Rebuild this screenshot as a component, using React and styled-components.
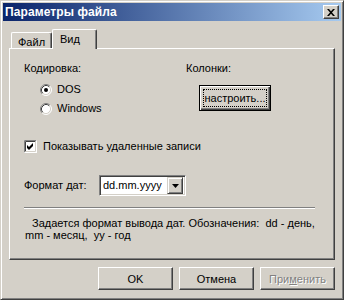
import React from "react";
import styled, { createGlobalStyle } from "styled-components";

const GlobalStyle = createGlobalStyle`
  html, body {
    margin: 0;
    padding: 0;
  }
  body {
    background: #d4d0c8;
    font-family: "Liberation Sans", Arial, sans-serif;
    font-size: 11px;
    color: #000;
  }
  * {
    box-sizing: border-box;
  }
`;

const Window = styled.div`
  width: 344px;
  height: 300px;
  display: flex;
  flex-direction: column;
  background: #d4d0c8;
  border: 1px solid;
  border-color: #d4d0c8 #404040 #404040 #d4d0c8;
  box-shadow: inset 1px 1px #fff, inset -1px -1px #808080;
  padding: 2px;
`;

const TitleBar = styled.div`
  height: 18px;
  display: flex;
  align-items: center;
  justify-content: space-between;
  padding: 0 2px;
  background: linear-gradient(to right, #0a246a, #a6caf0);
`;

const Title = styled.span`
  color: #fff;
  font-weight: bold;
  font-size: 12px;
  letter-spacing: 0.1px;
`;

const CloseButton = styled.div`
  width: 16px;
  height: 14px;
  display: flex;
  align-items: center;
  justify-content: center;
  background: #d4d0c8;
  border: 1px solid;
  border-color: #fff #404040 #404040 #fff;
  box-shadow: inset -1px -1px #808080;
`;

const Body = styled.div`
  flex: 1;
  display: flex;
  flex-direction: column;
  padding: 8px 6px 0 6px;
`;

const TabStrip = styled.div`
  height: 20px;
  display: flex;
  align-items: flex-end;
  padding-left: 2px;
  margin-bottom: -1px;
  position: relative;
  z-index: 1;
`;

const Tab = styled.div`
  height: ${(p) => (p.$active ? 20 : 16)}px;
  margin-bottom: ${(p) => (p.$active ? 0 : 1)}px;
  width: ${(p) => p.$w}px;
  padding: ${(p) => (p.$active ? "3px 0 0 7px" : "3px 0 0 6px")};
  background: #d4d0c8;
  border-top: 1px solid #fff;
  border-left: 1px solid #fff;
  border-right: 1px solid #404040;
  border-radius: 2px 2px 0 0;
  box-shadow: inset -1px 0 #808080;
  line-height: 13px;
`;

const Panel = styled.div`
  height: 212px;
  display: flex;
  flex-direction: column;
  padding-left: 14px;
  border: 1px solid;
  border-color: #fff #404040 #404040 #fff;
  box-shadow: inset -1px -1px #808080;
`;

const TopGrid = styled.div`
  display: grid;
  grid-template-columns: 162px 1fr;
  margin-top: 13px;
`;

const Column = styled.div`
  display: flex;
  flex-direction: column;
  align-items: flex-start;
`;

const Label = styled.div`
  line-height: 13px;
  white-space: nowrap;
  width: ${(p) => (p.$w ? `${p.$w}px` : "auto")};
`;

const RadioList = styled.div`
  display: flex;
  flex-direction: column;
  gap: 6px;
  margin-top: 8px;
  padding-left: 16px;
`;

const OptionRow = styled.div`
  display: flex;
  align-items: center;
  gap: ${(p) => p.$gap || 5}px;
  height: 13px;
  line-height: 13px;
  margin-top: ${(p) => p.$mt || 0}px;
`;

const DefaultButton = styled.div`
  width: 72px;
  height: 26px;
  margin-top: 10px;
  margin-left: 13px;
  display: flex;
  padding: 3px;
  background: #d4d0c8;
  border: 1px solid #000;
  box-shadow: inset 1px 1px #fff, inset -1px -1px #404040, inset -2px -2px #808080;
`;

const FocusRing = styled.div`
  flex: 1;
  display: flex;
  align-items: center;
  justify-content: center;
  border: 1px dotted #000;
`;

const FormatRow = styled.div`
  display: flex;
  align-items: center;
  height: 21px;
  margin-top: 22px;
`;

const Combo = styled.div`
  width: 87px;
  height: 21px;
  display: flex;
  align-items: center;
  background: #fff;
  border: 1px solid;
  border-color: #808080 #fff #fff #808080;
  box-shadow: inset 1px 1px #404040, inset -1px -1px #d4d0c8;
  padding: 2px 2px 2px 3px;
`;

const ComboText = styled.span`
  flex: 1;
  line-height: 13px;
`;

const DropButton = styled.div`
  width: 16px;
  height: 17px;
  display: flex;
  align-items: center;
  justify-content: center;
  background: #d4d0c8;
  border: 1px solid;
  border-color: #d4d0c8 #404040 #404040 #d4d0c8;
  box-shadow: inset 1px 1px #fff, inset -1px -1px #808080;
`;

const Separator = styled.div`
  width: 291px;
  height: 2px;
  margin-top: 11px;
  border-top: 1px solid #808080;
  border-bottom: 1px solid #fff;
`;

const Note = styled.div`
  margin-top: 8px;
  padding-left: 1px;
  text-indent: 7px;
  line-height: 12px;
  white-space: nowrap;
`;

const ButtonRow = styled.div`
  display: flex;
  justify-content: flex-end;
  gap: 6px;
  margin-top: 7px;
`;

const Button = styled.div`
  width: 75px;
  height: 23px;
  display: flex;
  align-items: center;
  justify-content: center;
  background: #d4d0c8;
  border: 1px solid;
  border-color: #fff #404040 #404040 #fff;
  box-shadow: inset -1px -1px #808080;
  color: ${(p) => (p.$disabled ? "#808080" : "#000")};
  text-shadow: ${(p) => (p.$disabled ? "1px 1px 0 #fff" : "none")};
`;

const Mnemonic = styled.span`
  text-decoration: underline;
`;

function CloseIcon() {
  return (
    <svg width="8" height="7" viewBox="0 0 8 7">
      <path d="M0 0h2l2 2.3L6 0h2L5 3.5 8 7H6L4 4.7 2 7H0l3-3.5z" fill="#000" />
    </svg>
  );
}

function Radio({ checked }) {
  return (
    <svg width="12" height="12" viewBox="0 0 12 12">
      <circle cx="6" cy="6" r="5" fill="#fff" />
      <path d="M2.11 9.89A5.5 5.5 0 0 1 9.89 2.11" stroke="#808080" fill="none" />
      <path d="M9.89 2.11A5.5 5.5 0 0 1 2.11 9.89" stroke="#fff" fill="none" />
      <path d="M2.82 9.18A4.5 4.5 0 0 1 9.18 2.82" stroke="#404040" fill="none" />
      <path d="M9.18 2.82A4.5 4.5 0 0 1 2.82 9.18" stroke="#d4d0c8" fill="none" />
      {checked && <circle cx="6" cy="6" r="2" fill="#000" />}
    </svg>
  );
}

function Checkbox() {
  return (
    <svg width="13" height="13" viewBox="0 0 13 13">
      <rect x="0" y="0" width="13" height="13" fill="#fff" />
      <path d="M0.5 12.5V0.5H12.5" stroke="#808080" fill="none" />
      <path d="M1.5 11.5V1.5H11.5" stroke="#404040" fill="none" />
      <path d="M0.5 12.5H12.5V0.5" stroke="#fff" fill="none" />
      <path d="M1.5 11.5H11.5V1.5" stroke="#d4d0c8" fill="none" />
      <path d="M3 5l2 2 4-4v3l-4 4-2-2z" fill="#000" />
    </svg>
  );
}

function Arrow() {
  return (
    <svg width="7" height="4" viewBox="0 0 7 4">
      <path d="M0 0h7L3.5 4z" fill="#000" />
    </svg>
  );
}

export default function App() {
  return (
    <>
      <GlobalStyle />
      <Window>
        <TitleBar>
          <Title>Параметры файла</Title>
          <CloseButton>
            <CloseIcon />
          </CloseButton>
        </TitleBar>
        <Body>
          <TabStrip>
            <Tab $w={41}>Файл</Tab>
            <Tab $w={45} $active>
              Вид
            </Tab>
          </TabStrip>
          <Panel>
            <TopGrid>
              <Column>
                <Label>Кодировка:</Label>
                <RadioList>
                  <OptionRow>
                    <Radio checked />
                    <span>DOS</span>
                  </OptionRow>
                  <OptionRow>
                    <Radio />
                    <span>Windows</span>
                  </OptionRow>
                </RadioList>
              </Column>
              <Column>
                <Label>Колонки:</Label>
                <DefaultButton>
                  <FocusRing>настроить...</FocusRing>
                </DefaultButton>
              </Column>
            </TopGrid>
            <OptionRow $mt={25} $gap={6}>
              <Checkbox />
              <span>Показывать удаленные записи</span>
            </OptionRow>
            <FormatRow>
              <Label $w={75}>Формат дат:</Label>
              <Combo>
                <ComboText>dd.mm.yyyy</ComboText>
                <DropButton>
                  <Arrow />
                </DropButton>
              </Combo>
            </FormatRow>
            <Separator />
            <Note>
              Задается формат вывода дат. Обозначения:&nbsp; dd - день,
              <br />
              mm - месяц,&nbsp; yy - год
            </Note>
          </Panel>
          <ButtonRow>
            <Button>OK</Button>
            <Button>Отмена</Button>
            <Button $disabled>
              При<Mnemonic>м</Mnemonic>енить
            </Button>
          </ButtonRow>
        </Body>
      </Window>
    </>
  );
}
